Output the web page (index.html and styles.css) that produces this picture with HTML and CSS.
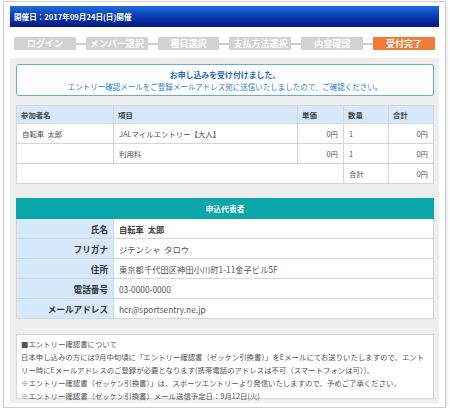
FILE: index.html
```html
<!DOCTYPE html>
<html lang="ja">
<head>
    <meta charset="UTF-8">
    <title>受付完了</title>
    <link rel="stylesheet" href="styles.css">
</head>
<body>
    <div class="page">
        <div class="title-bar">開催日：2017年09月24日(日)開催</div>

        <div class="steps">
            <div class="step">ログイン</div>
            <div class="step-line"></div>
            <div class="step">メンバー選択</div>
            <div class="step-line"></div>
            <div class="step">種目選択</div>
            <div class="step-line"></div>
            <div class="step">支払方法選択</div>
            <div class="step-line"></div>
            <div class="step">内容確認</div>
            <div class="step-line"></div>
            <div class="step current">受付完了</div>
        </div>

        <div class="panel">
            <div class="message">
                <p class="message-title">お申し込みを受け付けました。</p>
                <p>エントリー確認メールをご登録メールアドレス宛に送信いたしましたので、ご確認ください。</p>
            </div>

            <table class="entry-table">
                <tr>
                    <th class="col-name">参加者名</th>
                    <th class="col-item">項目</th>
                    <th class="col-price">単価</th>
                    <th class="col-qty">数量</th>
                    <th class="col-total">合計</th>
                </tr>
                <tr>
                    <td>自転車&nbsp;&nbsp;太郎</td>
                    <td>JALマイルエントリー【大人】</td>
                    <td class="num">0円</td>
                    <td>1</td>
                    <td class="num">0円</td>
                </tr>
                <tr>
                    <td></td>
                    <td>利用料</td>
                    <td class="num">0円</td>
                    <td>1</td>
                    <td class="num">0円</td>
                </tr>
                <tr>
                    <td colspan="3"></td>
                    <td>合計</td>
                    <td class="num">0円</td>
                </tr>
            </table>

            <table class="rep-table">
                <tr>
                    <th colspan="2" class="rep-head">申込代表者</th>
                </tr>
                <tr>
                    <th>氏名</th>
                    <td class="strong">自転車&nbsp;&nbsp;太郎</td>
                </tr>
                <tr>
                    <th>フリガナ</th>
                    <td>ジテンシャ&nbsp;&nbsp;タロウ</td>
                </tr>
                <tr>
                    <th>住所</th>
                    <td>東京都千代田区神田小川町1-11金子ビル5F</td>
                </tr>
                <tr>
                    <th>電話番号</th>
                    <td>03-0000-0000</td>
                </tr>
                <tr>
                    <th>メールアドレス</th>
                    <td>hcr@sportsentry.ne.jp</td>
                </tr>
            </table>

            <div class="notes">
                <p>■エントリー確認書について</p>
                <p>日本申し込みの方には9月中旬頃に「エントリー確認書（ゼッケン引換書）」をEメールにてお送りいたしますので、エントリー時にEメールアドレスのご登録が必要となります(携帯電話のアドレスは不可（スマートフォンは可）)。</p>
                <p><span class="mark">※</span>エントリー確認書（ゼッケン引換書）」は、スポーツエントリーより発信いたしますので、予めご了承ください。</p>
                <p><span class="mark">※</span>エントリー確認書（ゼッケン引換書）メール送信予定日：9月12日(火)</p>
            </div>
        </div>
    </div>
</body>
</html>
```

FILE: styles.css
```css
* { margin: 0; padding: 0; box-sizing: border-box; }
body { font-family: "Noto Sans CJK JP", "Liberation Sans", sans-serif; background: #fff; color: #555; font-size: 7.6px; }
.page { width: 443px; margin: 1px 0 0 3px; padding: 4px 6px 4px 6px; border: 1px solid #cfcfcf; background: #fff; box-shadow: 1px 1px 2px rgba(0,0,0,0.12); }

.title-bar { height: 21px; line-height: 21px; padding-left: 4px; color: #fff; font-weight: bold; font-size: 7.6px; background: linear-gradient(#1c6fe0, #0a3fb5 45%, #021784); }

.steps { display: flex; align-items: center; margin: 10px 4px 8px 4px; }
.step { flex: 1; height: 13px; line-height: 13px; text-align: center; background: #d2d2d2; color: #fff; font-weight: bold; font-size: 9px; border-radius: 1px; }
.step.current { background: #f47a37; }
.step-line { flex: 0 0 10px; height: 2px; background: #cdcdcd; }

.panel { background: #eeeeee; padding: 6px 5px 4px 6px; }

.message { background: #fff; border: 1px solid #67ace2; border-radius: 3px; height: 32px; padding-top: 4px; text-align: center; color: #2a7fca; line-height: 12px; font-size: 7.5px; }
.message-title { font-weight: bold; color: #1c6cc0; font-size: 7.9px; }

table { width: 100%; border-collapse: collapse; background: #fff; }
td, th { border: 1px solid #d6d6d6; padding: 0 5px; text-align: left; font-weight: normal; }

.entry-table { margin-top: 9px; font-size: 7.4px; }
.entry-table th { height: 18px; background: #d6e9fb; color: #444; font-weight: bold; padding-left: 4px; }
.entry-table td { height: 20px; }
.entry-table .col-name { width: 97px; }
.entry-table .col-price { width: 46px; }
.entry-table .col-qty { width: 45px; }
.entry-table .col-total { width: 45px; }
.entry-table .num { text-align: right; }

.rep-table { margin-top: 14px; font-size: 8.3px; }
.rep-table th { width: 97px; height: 20px; background: #d6e9fb; color: #333; font-weight: bold; text-align: right; padding-right: 5px; font-size: 8.6px; }
.rep-table td { height: 20px; }
.rep-table .rep-head { background: #0ba6aa; color: #fff; text-align: center; border-color: #0ba6aa; font-size: 7.8px; }
.rep-table .strong { font-weight: bold; color: #444; }

.notes { margin-top: 15px; background: #fff; border: 1px solid #d6d6d6; padding: 2px 2px 3px 4px; line-height: 13px; color: #555; height: 65px; font-size: 7.4px; line-break: loose; }
.notes .mark { color: #777; }
```
